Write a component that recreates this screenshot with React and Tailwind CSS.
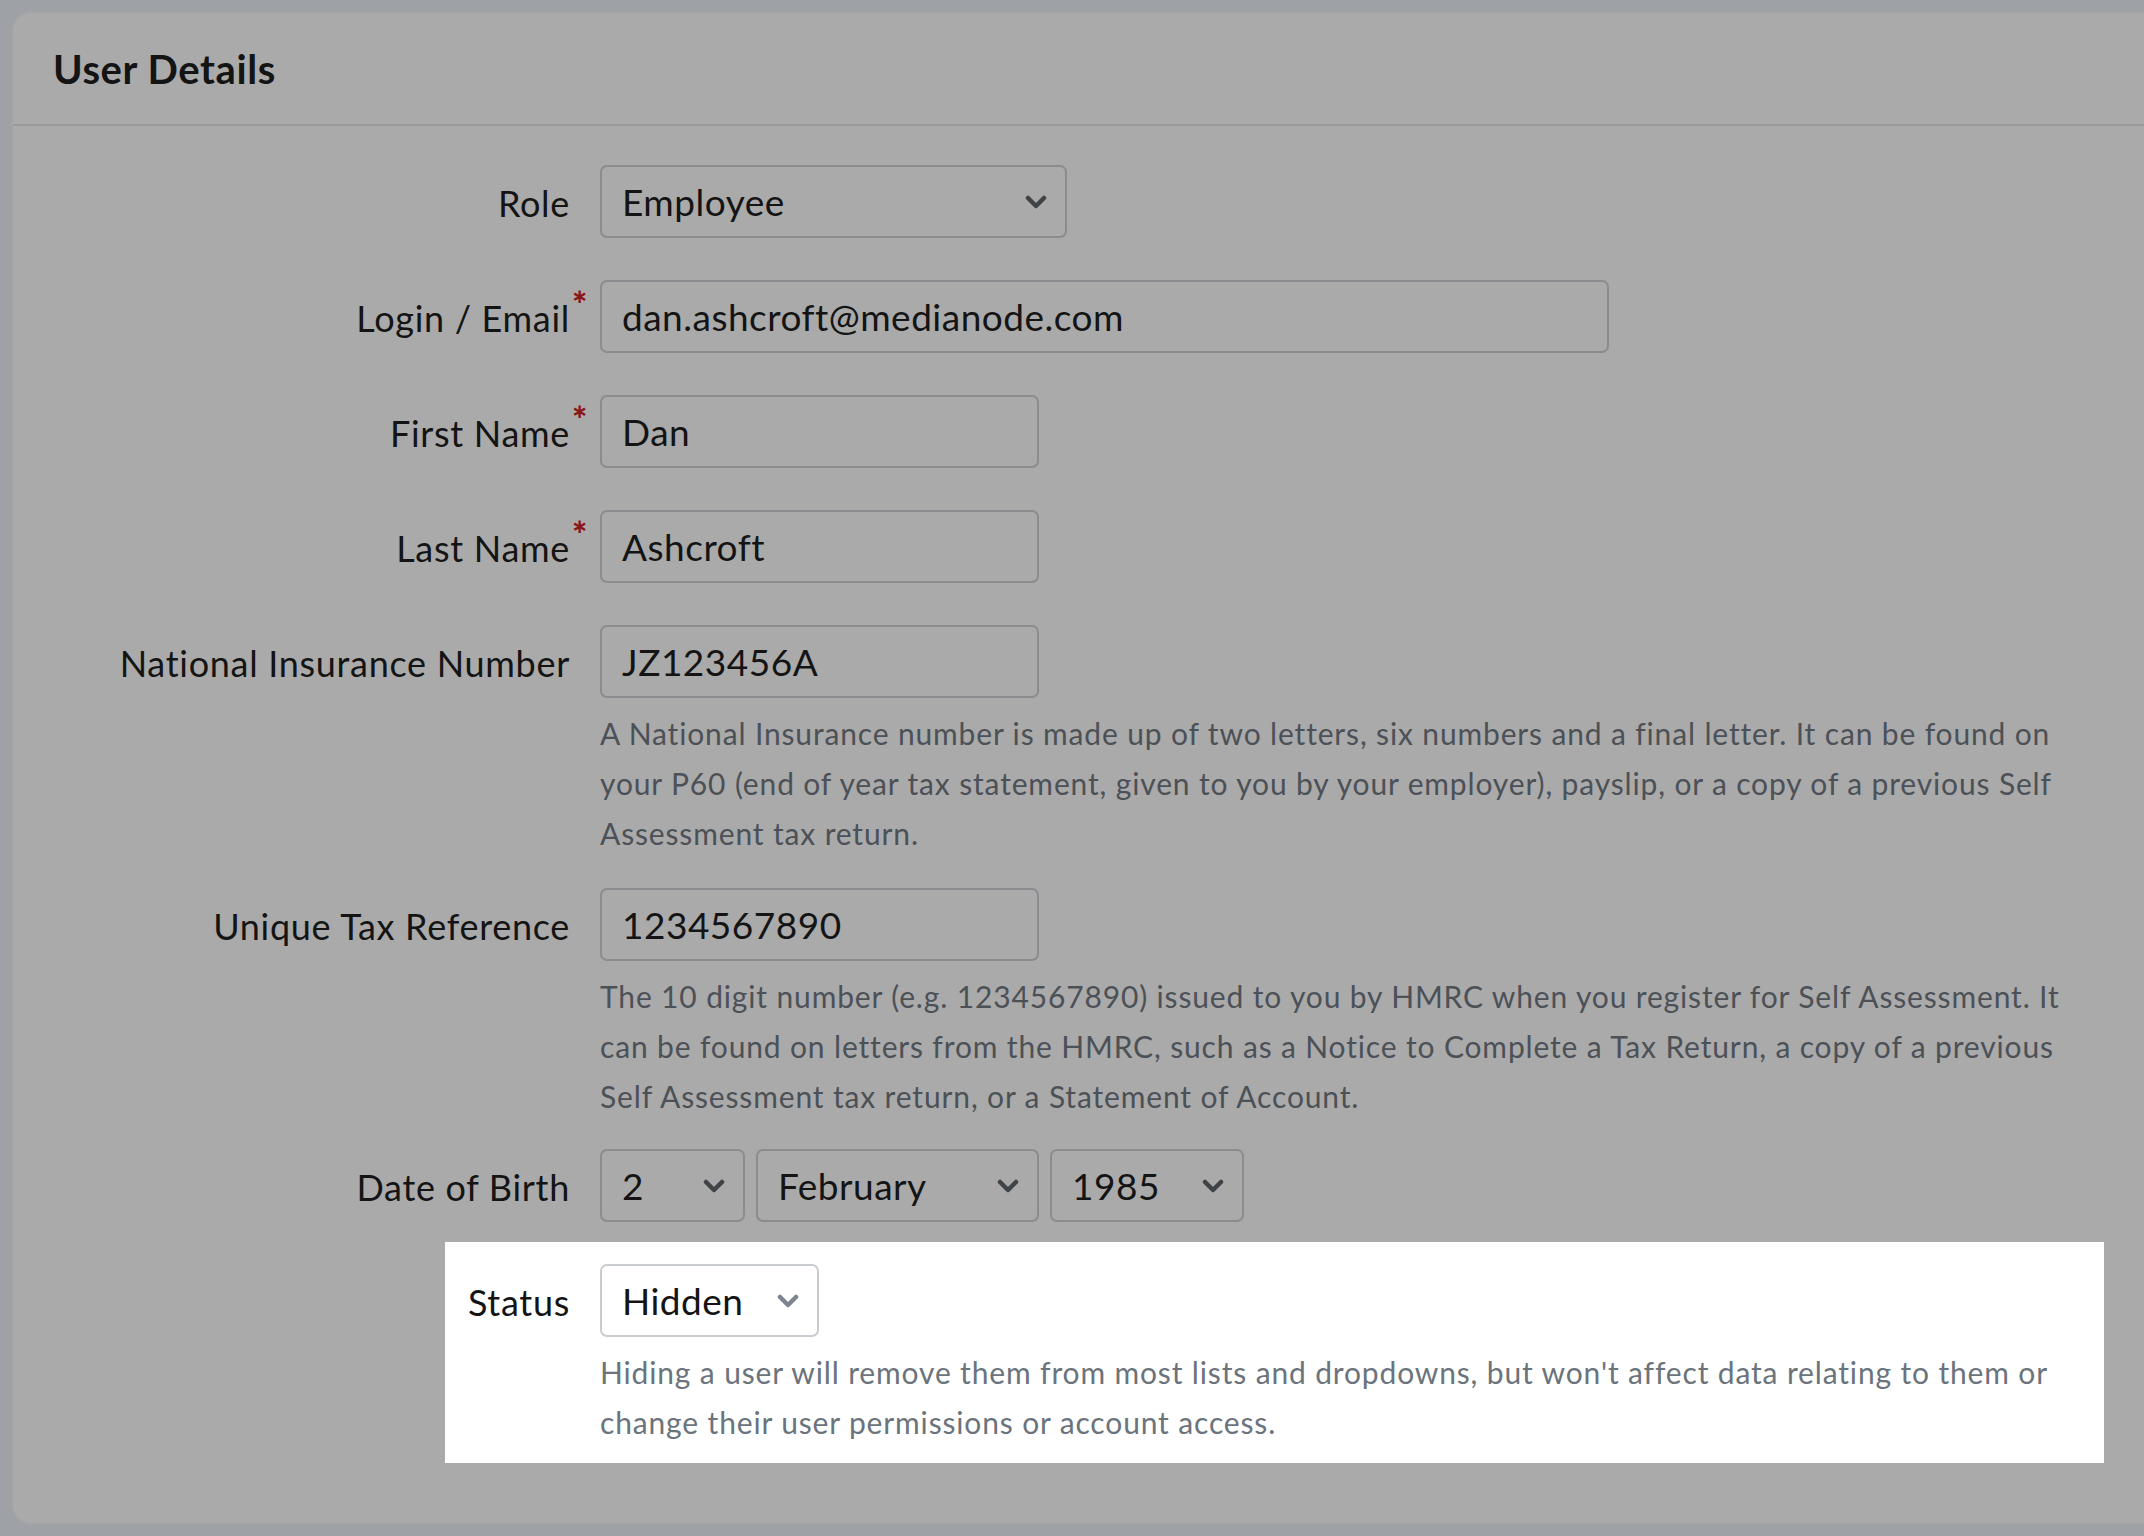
const F = { fontFamily: "Lato, 'Open Sans', sans-serif" };

function Chev({ c = "#3f4347" }) {
  return (
    <svg width="22" height="14" viewBox="0 0 22 14" fill="none">
      <path d="M3 3l8 8 8-8" stroke={c} strokeWidth="4.5" strokeLinecap="round" strokeLinejoin="round" />
    </svg>
  );
}

function Label({ children, req, w = "w-[557px]" }) {
  return (
    <div className={`${w} shrink-0 flex justify-end items-center h-[73px] text-[36px] tracking-[0.7px] text-[#141414]`}>
      <span className="relative pt-[2px]">
        {children}
        {req && <span className="absolute -right-[18px] -top-[12px] text-[36px] text-[#8b1414] font-black">*</span>}
      </span>
    </div>
  );
}

function Box({ w, children, sel, white }) {
  return (
    <div
      className={`${w} h-[73px] shrink-0 rounded-[7px] border-2 flex items-center justify-between pl-[20px] pr-[18px] text-[37px] tracking-[0.5px] text-[#141414] ${white ? "bg-white border-[#c9ccd0]" : "bg-[#aaaaaa] border-[#8a8c8f]"}`}
    >
      <span>{children}</span>
      {sel && <Chev c={white ? "#7c8590" : "#3f4347"} />}
    </div>
  );
}

function Help({ children, white }) {
  return (
    <div className={`mt-[10px] text-[30px] leading-[50px] tracking-[0.85px] ${white ? "text-[#6b737c]" : "text-[#4c5157]"}`}>{children}</div>
  );
}

export default function App() {
  return (
    <div style={F} className="w-[2144px] h-[1536px] bg-[#9ea1a5] overflow-hidden pt-[11px] pl-[11px]">
      <div className="w-[2160px] h-[1514px] bg-[#aaaaaa] rounded-tl-[20px] rounded-bl-[20px] border-2 border-[#a2a4a7] border-r-0">
        <div className="h-[113px] border-b-2 border-[#999b9e] flex items-center pl-[40px]">
          <h1 className="text-[40px] font-bold tracking-[0.6px] text-[#141414]">User Details</h1>
        </div>
        <div className="pt-[39px] flex flex-col gap-[42px] pr-[56px]">
          <div className="flex gap-[30px]">
            <Label>Role</Label>
            <Box w="w-[467px]" sel>Employee</Box>
          </div>
          <div className="flex gap-[30px]">
            <Label req>Login / Email</Label>
            <Box w="w-[1009px]">dan.ashcroft@medianode.com</Box>
          </div>
          <div className="flex gap-[30px]">
            <Label req>First Name</Label>
            <Box w="w-[439px]">Dan</Box>
          </div>
          <div className="flex gap-[30px]">
            <Label req>Last Name</Label>
            <Box w="w-[439px]">Ashcroft</Box>
          </div>
          <div className="flex gap-[30px]">
            <Label>National Insurance Number</Label>
            <div className="w-[1512px]">
              <Box w="w-[439px]">JZ123456A</Box>
              <Help>A National Insurance number is made up of two letters, six numbers and a final letter. It can be found on your P60 (end of year tax statement, given to you by your employer), payslip, or a copy of a previous Self Assessment tax return.</Help>
            </div>
          </div>
          <div className="flex gap-[30px] -mt-[12px]">
            <Label>Unique Tax Reference</Label>
            <div className="w-[1512px]">
              <Box w="w-[439px]">1234567890</Box>
              <Help>The 10 digit number (e.g. 1234567890) issued to you by HMRC when you register for Self Assessment. It can be found on letters from the HMRC, such as a Notice to Complete a Tax Return, a copy of a previous Self Assessment tax return, or a Statement of Account.</Help>
            </div>
          </div>
          <div className="flex gap-[30px] -mt-[14px]">
            <Label>Date of Birth</Label>
            <div className="flex gap-[11px]">
              <Box w="w-[145px]" sel>2</Box>
              <Box w="w-[283px]" sel>February</Box>
              <Box w="w-[194px]" sel>1985</Box>
            </div>
          </div>
          <div className="-mt-[22px] ml-[432px] w-[1659px] bg-white flex gap-[30px] pt-[22px] pb-[16px]">
            <Label w="w-[125px]">Status</Label>
            <div className="w-[1482px]">
              <Box w="w-[219px]" sel white>Hidden</Box>
              <Help white>Hiding a user will remove them from most lists and dropdowns, but won't affect data relating to them or change their user permissions or account access.</Help>
            </div>
          </div>
        </div>
      </div>
    </div>
  );
}
